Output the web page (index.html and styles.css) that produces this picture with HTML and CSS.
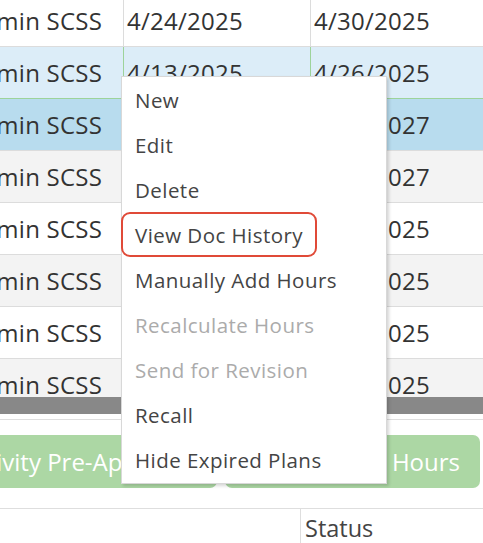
FILE: index.html
```html
<!DOCTYPE html>
<html>
<head>
<meta charset="utf-8">
<link rel="stylesheet" href="styles.css">
</head>
<body>
<div class="page">
  <div class="grid">
    <div class="rows">
      <div class="row">
        <div class="cell c1">Admin SCSS</div><div class="cell c2">4/24/2025</div><div class="cell c3">4/30/2025</div>
      </div>
      <div class="row hover">
        <div class="cell c1">Admin SCSS</div><div class="cell c2">4/13/2025</div><div class="cell c3">4/26/2025</div>
      </div>
      <div class="row selected">
        <div class="cell c1">Admin SCSS</div><div class="cell c2">7/1/2025</div><div class="cell c3">6/30/2027</div>
      </div>
      <div class="row alt">
        <div class="cell c1">Admin SCSS</div><div class="cell c2">7/1/2025</div><div class="cell c3">6/30/2027</div>
      </div>
      <div class="row">
        <div class="cell c1">Admin SCSS</div><div class="cell c2">3/1/2025</div><div class="cell c3">3/31/2025</div>
      </div>
      <div class="row alt">
        <div class="cell c1">Admin SCSS</div><div class="cell c2">2/1/2025</div><div class="cell c3">2/28/2025</div>
      </div>
      <div class="row">
        <div class="cell c1">Admin SCSS</div><div class="cell c2">1/1/2025</div><div class="cell c3">1/31/2025</div>
      </div>
      <div class="row alt">
        <div class="cell c1">Admin SCSS</div><div class="cell c2">1/1/2025</div><div class="cell c3">1/15/2025</div>
      </div>
    </div>
  </div>
  <div class="hscroll"></div>
  <div class="actions">
    <button class="btn btn-left">Activity Pre-Approval</button>
    <button class="btn btn-right">Add Hours</button>
  </div>
  <div class="header">
    <div class="hcell h1"></div>
    <div class="hcell h2">Status</div>
  </div>
  <ul class="menu">
    <li class="item">New</li>
    <li class="item">Edit</li>
    <li class="item">Delete</li>
    <li class="item"><span class="highlight">View Doc History</span></li>
    <li class="item">Manually Add Hours</li>
    <li class="item disabled">Recalculate Hours</li>
    <li class="item disabled">Send for Revision</li>
    <li class="item">Recall</li>
    <li class="item">Hide Expired Plans</li>
  </ul>
</div>
</body>
</html>
```
FILE: styles.css
```css
* { box-sizing: border-box; }
html, body { margin: 0; padding: 0; background: #fff; }
body { width: 483px; height: 543px; overflow: hidden; font-family: "Open Sans", "Noto Sans", sans-serif; color: #333; }
.page { position: relative; width: 483px; height: 543px; overflow: hidden; }

.grid { height: 397px; overflow: hidden; }
.rows { margin-top: -5px; margin-left: -37px; }
.row { display: grid; grid-template-columns: 161px 187px 1fr; height: 52px; border-bottom: 1px solid #dcdcdc; background: #fff; }
.row.alt { background: #f3f3f3; }
.row.hover { background: #dcedf8; border-bottom-color: #9dd39a; }
.row.selected { background: #b8dcee; }
.cell { display: flex; align-items: center; padding-left: 3px; font-size: 24px; letter-spacing: 0.25px; white-space: nowrap; overflow: hidden; border-right: 1px solid #dcdcdc; }
.cell.c3 { border-right: none; }
.row.hover .cell.c1, .row.hover .cell.c2 { border-right-color: #9dd39a; }

.hscroll { height: 17px; background: #888; }

.actions { margin-top: 5px; border-top: 1px solid #dedede; height: 89px; display: flex; gap: 8px; padding-top: 15px; overflow: hidden; }
.btn { height: 53px; border: none; border-radius: 7px; background: #acd7a4; color: #fff; font-family: "Open Sans", "Noto Sans", sans-serif; font-size: 24px; white-space: nowrap; padding: 0 20px; }
.btn-left { width: 272px; margin-left: -55px; text-align: left; padding-left: 16px; }
.btn-right { width: 255px; text-align: right; }

.header { display: flex; border-top: 1px solid #dedede; height: 35px; }
.hcell { font-size: 23.5px; color: #444; padding-left: 4px; padding-top: 3px; }
.h1 { width: 300px; }
.h2 { flex: 1; border-left: 1px solid #dedede; }

.menu { position: absolute; left: 121px; top: 76px; width: 266px; height: 408px; margin: 0; padding: 0 0 2px; list-style: none; background: #fff; border: 1px solid #d8d8d8; box-shadow: 2px 2px 3px rgba(0,0,0,0.16); }
.item { height: 45px; display: flex; align-items: center; padding-left: 13px; font-size: 20.5px; letter-spacing: 0.45px; color: #444; white-space: nowrap; }
.item.disabled { color: #ababab; }
.highlight { display: inline-flex; align-items: center; height: 45px; margin-left: -14px; padding: 0 12px 0 12px; border: 2px solid #e04a38; border-radius: 9px; }
```
